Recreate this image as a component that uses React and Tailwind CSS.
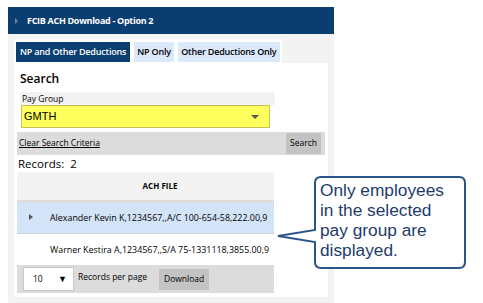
import React from 'react';

const panelFont = { fontFamily: '"Open Sans", "Noto Sans", sans-serif' };

const Callout = () => (
  <div className="absolute left-[270px] top-[170px] w-[200px] h-[105px]">
    <svg width="200" height="105" className="absolute left-0 top-0">
      <path
        d="M51 7 H189 Q195 7 195 13 V92 Q195 98 189 98 H51 Q45 98 45 92 V72 L8 66 L45 60 V13 Q45 7 51 7 Z"
        fill="#ffffff"
        stroke="#2b5586"
        strokeWidth="2"
        strokeLinejoin="miter"
      />
    </svg>
    <div
      className="absolute left-[50px] top-[10px] text-[17.3px] leading-[20px] text-[#1f3b6b] whitespace-nowrap"
      style={{ fontFamily: '"Liberation Sans", Arial, sans-serif' }}
    >
      <div>Only employees</div>
      <div>in the selected</div>
      <div>pay group are</div>
      <div>displayed.</div>
    </div>
  </div>
);

const App = () => {
  return (
    <div className="relative w-[483px] h-[303px] overflow-hidden bg-white pl-[8px] pt-[7px]" style={panelFont}>
      <div className="w-[326px] h-[300px] bg-[#f3f3f3]">
        {/* header */}
        <div className="h-[27px] bg-[#0a3d70] flex items-center">
          <span className="ml-[7px] w-0 h-0 border-y-[3px] border-y-transparent border-l-[3px] border-l-[#6f86a0]" />
          <span className="ml-[9px] text-white text-[9px] font-bold tracking-[-0.3px]">FCIB ACH Download - Option 2</span>
        </div>

        <div className="px-[6px] pt-[5px]">
          {/* tabs */}
          <div className="w-[268px] h-[24px] bg-white pl-[2px] pt-[3px] flex gap-[4px]">
            <div className="h-[20px] px-[4px] bg-[#0a3d70] text-white text-[9px] font-semibold flex items-center tracking-[-0.2px]">NP and Other Deductions</div>
            <div className="h-[20px] px-[3px] bg-[#dce9fb] text-black text-[9px] font-semibold flex items-center tracking-[-0.2px]">NP Only</div>
            <div className="h-[20px] w-[102px] justify-center bg-[#dce9fb] text-black text-[9px] font-semibold flex items-center tracking-[-0.2px]">Other Deductions Only</div>
          </div>

          {/* content */}
          <div className="bg-white h-[234px] px-[3px]">
            <div className="h-[29px] pt-[8px] pl-[3px] text-[12px] leading-[16px] font-semibold text-black">Search</div>
            <div className="ml-[3px] w-[255px] h-[13px] bg-[#f3f3f3] pl-[2px] text-[8.5px] leading-[13px] text-black">Pay Group</div>
            <div className="ml-[4px] w-[249px] h-[23px] bg-[#ffff5e] border border-[#c2c25a] flex items-center justify-between pl-[2px] pr-[10px]">
              <span className="text-[11px] text-black" style={{ fontFamily: '"Liberation Sans", Arial, sans-serif' }}>GMTH</span>
              <span className="w-0 h-0 border-x-[4px] border-x-transparent border-t-[4px] border-t-[#555]" />
            </div>

            <div className="mt-[4px] w-[308px] h-[23px] bg-[#dcdcdc] flex items-center justify-between pl-[2px] pr-[4px]">
              <span className="text-[8.5px] underline text-black">Clear Search Criteria</span>
              <span className="h-[21px] w-[35px] bg-[#c3c3c3] flex items-center justify-center text-[8.5px] text-black">Search</span>
            </div>

            <div className="h-[17px] pl-[1px] text-[11.5px] leading-[17px] text-black">Records:&nbsp; 2</div>

            {/* table */}
            <div className="w-[257px]">
              <div className="h-[28px] bg-[#f3f3f3] flex items-center justify-center pl-[29px] text-[8px] font-bold text-black">ACH FILE</div>
              <div className="h-[3px] bg-[#dcdcdc]" />
              <div className="h-[31px] bg-[#d4e4f8] flex items-center border-b border-[#d0d0d0]">
                <span className="ml-[12px] mb-[3px] w-0 h-0 border-y-[3px] border-y-transparent border-l-[4px] border-l-[#555]" />
                <span className="ml-[17px] whitespace-nowrap text-[8.9px] text-black">Alexander Kevin K,1234567,,A/C 100-654-58,222.00,9</span>
              </div>
              <div className="h-[31px] bg-white flex items-center">
                <span className="ml-[33px] whitespace-nowrap text-[8.9px] text-black">Warner Kestira A,1234567,,S/A 75-1331118,3855.00,9</span>
              </div>
              <div className="h-[28px] bg-[#dcdcdc] flex items-center pl-[6px]">
                <div className="w-[51px] h-[24px] bg-white border border-[#c8c8c8] flex items-center justify-between pl-[9px] pr-[6px]">
                  <span className="text-[8.5px] text-black">10</span>
                  <span className="text-[9px] text-black">▼</span>
                </div>
                <span className="ml-[4px] mb-[3px] text-[8.5px] text-black">Records per page</span>
                <span className="ml-[12px] h-[21px] w-[50px] bg-[#c3c3c3] flex items-center justify-center text-[8.5px] text-black">Download</span>
              </div>
            </div>
          </div>
        </div>
      </div>
      <Callout />
    </div>
  );
};

export default App;
